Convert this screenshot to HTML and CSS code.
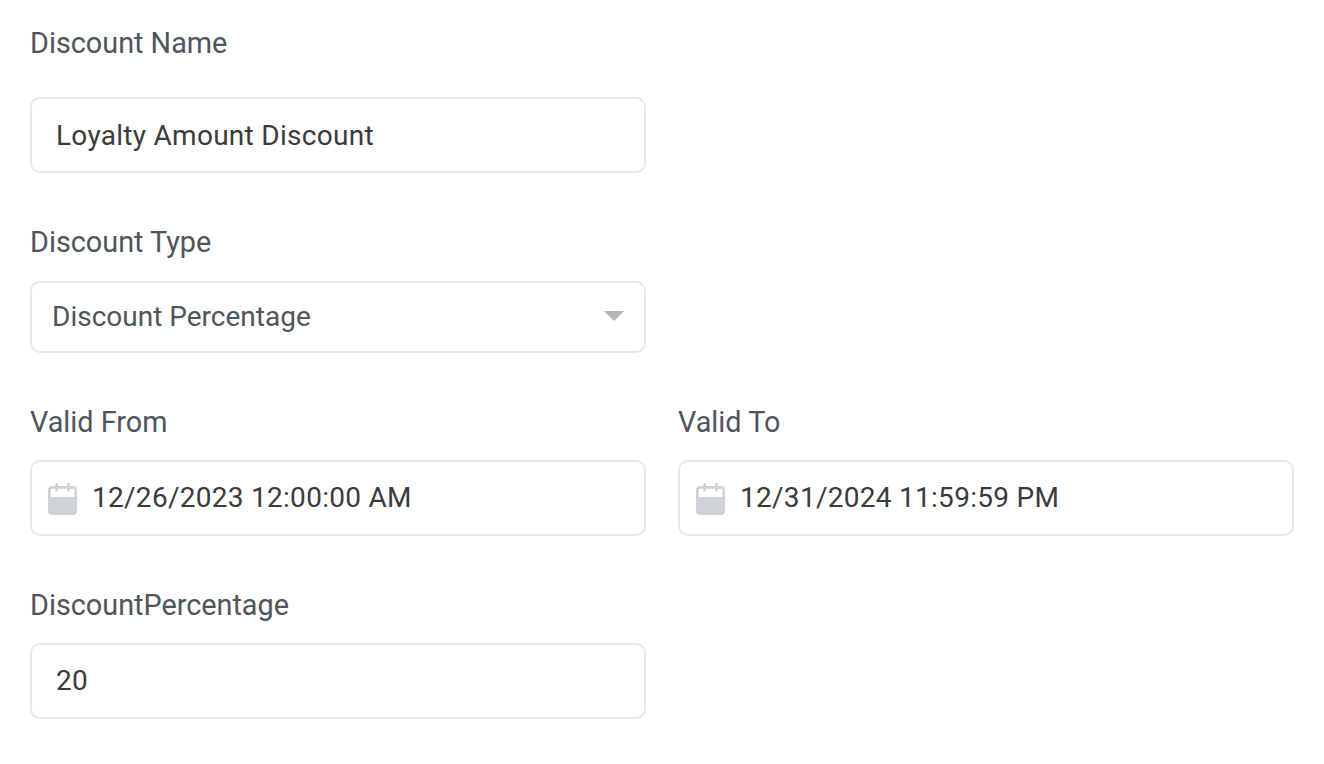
FILE: index.html
```html
<!DOCTYPE html>
<html lang="en">
<head>
    <meta charset="UTF-8">
    <meta name="viewport" content="width=device-width, initial-scale=1.0">
    <title>Discount</title>
    <link rel="stylesheet" href="styles.css">
</head>
<body>
    <form class="discount-form">
        <div class="field field-name">
            <label class="label" for="name">Discount Name</label>
            <input class="control input" id="name" type="text" value="Loyalty Amount Discount">
        </div>

        <div class="field field-type">
            <div class="label">Discount Type</div>
            <div class="control select">
                <span>Discount Percentage</span>
                <span class="arrow"></span>
            </div>
        </div>

        <div class="row">
            <div class="field">
                <label class="label" for="from">Valid From</label>
                <div class="control date">
                    <svg class="calendar" viewBox="0 0 29 32">
                        <rect y="3" width="29" height="29" rx="4"/>
                        <rect class="page" x="2.7" y="5.7" width="23.6" height="8.3" rx="0.8"/>
                        <rect x="7.3" width="2.7" height="8.5" rx="1.3"/>
                        <rect x="19" width="2.7" height="8.5" rx="1.3"/>
                    </svg>
                    <input class="date-input" id="from" type="text" value="12/26/2023 12:00:00 AM">
                </div>
            </div>
            <div class="field">
                <label class="label" for="to">Valid To</label>
                <div class="control date">
                    <svg class="calendar" viewBox="0 0 29 32">
                        <rect y="3" width="29" height="29" rx="4"/>
                        <rect class="page" x="2.7" y="5.7" width="23.6" height="8.3" rx="0.8"/>
                        <rect x="7.3" width="2.7" height="8.5" rx="1.3"/>
                        <rect x="19" width="2.7" height="8.5" rx="1.3"/>
                    </svg>
                    <input class="date-input" id="to" type="text" value="12/31/2024 11:59:59 PM">
                </div>
            </div>
        </div>

        <div class="field field-percentage">
            <label class="label" for="percentage">DiscountPercentage</label>
            <input class="control input" id="percentage" type="text" value="20">
        </div>
    </form>
</body>
</html>
```
FILE: styles.css
```css
* {
    margin: 0;
    padding: 0;
    box-sizing: border-box;
}

body {
    background-color: #fff;
    color: #4f555d;
    font-family: Roboto, sans-serif;
    font-size: 28px;
}

.discount-form {
    padding: 25px 30px;
}

.field {
    width: 616px;
    margin-bottom: 51px;
}

.label {
    display: block;
    height: 36px;
    line-height: 36px;
    font-size: 28.8px;
    margin-bottom: 20px;
}

.field-name .label {
    margin-bottom: 36px;
}

.field-type .label {
    margin-bottom: 21px;
}

.control {
    display: flex;
    align-items: center;
    width: 100%;
    height: 76px;
    border: 2px solid #e8e8e8;
    border-radius: 10px;
    background-color: #fff;
}

.input,
.date-input {
    color: #3b3b3b;
    font-family: inherit;
    font-size: 28px;
    letter-spacing: 0.01em;
    outline: none;
}

.input {
    padding: 0 24px;
}

.field-percentage .input {
    padding-bottom: 2px;
}

.select {
    justify-content: space-between;
    height: 72px;
    padding: 0 20px 2px;
}

.arrow {
    border-top: 10px solid #b5b5b5;
    border-left: 10px solid transparent;
    border-right: 10px solid transparent;
}

.row {
    display: flex;
    gap: 32px;
}

.date {
    padding: 0 16px;
}

.calendar {
    width: 29px;
    height: 32px;
    margin-top: 2px;
    margin-right: 15px;
    fill: #cfd2d7;
}

.calendar .page {
    fill: #fff;
}

.date-input {
    flex: 1;
    min-width: 0;
    padding-bottom: 2px;
    border: none;
}
```
